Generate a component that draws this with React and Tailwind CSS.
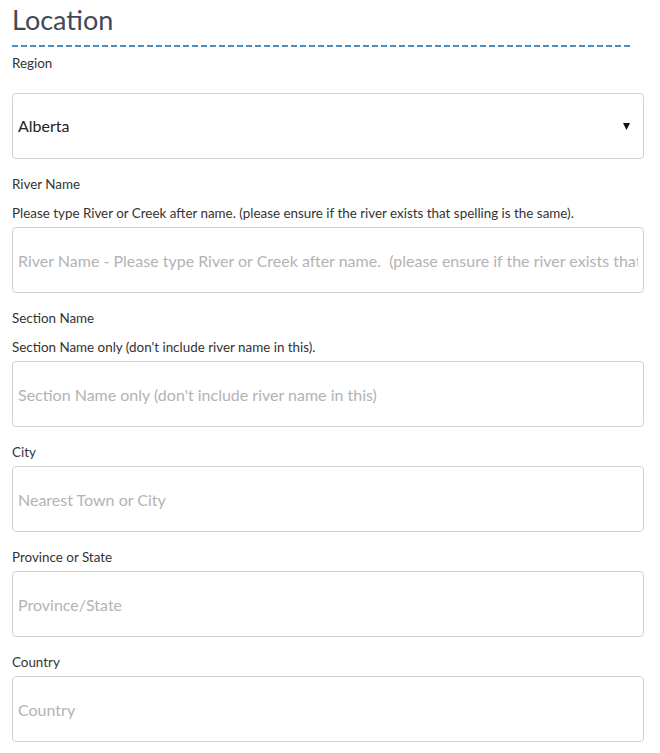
import React from "react";

const font = { fontFamily: "Lato, 'Open Sans', sans-serif" };

function Label({ children, className = "" }) {
  return (
    <div className={"text-[13.4px] leading-[20px] text-[#333] " + className}>{children}</div>
  );
}

function TextInput({ placeholder }) {
  return (
    <input
      type="text"
      placeholder={placeholder}
      className="block w-[632px] h-[66px] border border-[#d2d2d2] rounded-[4px] px-[5px] text-[16px] text-[#333] placeholder:text-[#b3b3b3] bg-white outline-none"
      style={font}
    />
  );
}

export default function App() {
  return (
    <div className="bg-white w-[660px] min-h-[753px] pl-[12px]" style={font}>
      <h1 className="pt-[4px] text-[27px] leading-[31px] text-[#3e4a59] font-normal">Location</h1>
      <div className="mt-[10px] w-[621px] h-[2px] bg-[repeating-linear-gradient(to_right,#4a8dc0_0px,#4a8dc0_6px,transparent_6px,transparent_9px)]" />
      <Label className="mt-[6px]">Region</Label>
      <div className="relative mt-[20px] w-[632px]">
        <select
          className="block w-[632px] h-[66px] border border-[#d2d2d2] rounded-[4px] px-[5px] text-[16px] text-[#222] bg-white outline-none appearance-none"
          style={font}
          defaultValue="Alberta"
        >
          <option>Alberta</option>
          <option>British Columbia</option>
          <option>Ontario</option>
        </select>
        <svg className="absolute left-[611px] top-[30px] pointer-events-none" width="7" height="7" viewBox="0 0 7 7">
          <polygon points="0,0 7,0 3.5,7" fill="#111" />
        </svg>
      </div>

      <Label className="mt-[15px]">River Name</Label>
      <Label className="mt-[9px]">
        Please type River or Creek after name. (please ensure if the river exists that spelling is the same).
      </Label>
      <div className="mt-[4px]">
        <TextInput placeholder="River Name - Please type River or Creek after name.  (please ensure if the river exists that spelling is the same)." />
      </div>

      <Label className="mt-[15px]">Section Name</Label>
      <Label className="mt-[9px]">Section Name only (don't include river name in this).</Label>
      <div className="mt-[4px]">
        <TextInput placeholder="Section Name only (don't include river name in this)" />
      </div>

      <Label className="mt-[15px]">City</Label>
      <div className="mt-[4px]">
        <TextInput placeholder="Nearest Town or City" />
      </div>

      <Label className="mt-[15px]">Province or State</Label>
      <div className="mt-[4px]">
        <TextInput placeholder="Province/State" />
      </div>

      <Label className="mt-[15px]">Country</Label>
      <div className="mt-[4px]">
        <TextInput placeholder="Country" />
      </div>
    </div>
  );
}
